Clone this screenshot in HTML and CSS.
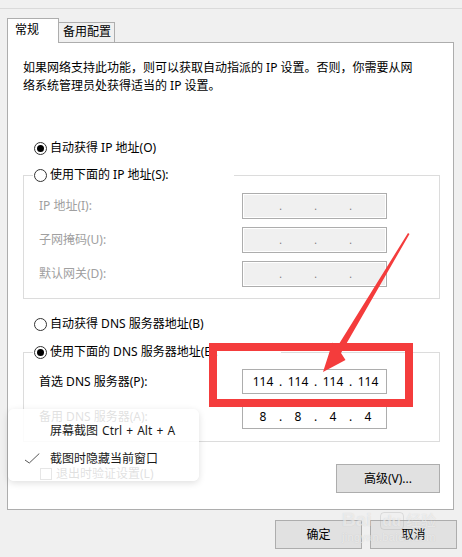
FILE: index.html
```html
<!DOCTYPE html>
<html lang="zh-CN">
<head>
<meta charset="utf-8">
<title>IPv4 属性</title>
<link rel="stylesheet" href="styles.css">
</head>
<body>
<div class="titlebar"></div>
<div class="tabs">
  <div class="tab active">常规</div>
  <div class="tab">备用配置</div>
</div>
<div class="panel">
  <p class="intro">如果网络支持此功能，则可以获取自动指派的 IP 设置。否则，你需要从网<br>络系统管理员处获得适当的 IP 设置。</p>
  <div class="opt opt-first"><span class="radio on"></span>自动获得 IP 地址(O)</div>
  <fieldset class="group group-ip">
    <legend class="opt legend-ip"><span class="radio"></span>使用下面的 IP 地址(S):</legend>
    <div class="row dim">
      <span class="lbl">IP 地址(I):</span>
      <div class="ip off"><span></span><i>.</i><span></span><i>.</i><span></span><i>.</i><span></span></div>
    </div>
    <div class="row dim">
      <span class="lbl">子网掩码(U):</span>
      <div class="ip off"><span></span><i>.</i><span></span><i>.</i><span></span><i>.</i><span></span></div>
    </div>
    <div class="row dim">
      <span class="lbl">默认网关(D):</span>
      <div class="ip off"><span></span><i>.</i><span></span><i>.</i><span></span><i>.</i><span></span></div>
    </div>
  </fieldset>
  <div class="opt opt-third"><span class="radio"></span>自动获得 DNS 服务器地址(B)</div>
  <fieldset class="group group-dns">
    <legend class="opt legend-dns"><span class="radio on"></span>使用下面的 DNS 服务器地址(E):</legend>
    <div class="row dns">
      <span class="lbl">首选 DNS 服务器(P):</span>
      <div class="ip"><span>114</span><i>.</i><span>114</span><i>.</i><span>114</span><i>.</i><span>114</span></div>
    </div>
    <div class="row dns">
      <span class="lbl">备用 DNS 服务器(A):</span>
      <div class="ip"><span>8</span><i>.</i><span>8</span><i>.</i><span>4</span><i>.</i><span>4</span></div>
    </div>
  </fieldset>
  <div class="bottom-row">
    <div class="check"><span class="box"></span>退出时验证设置(L)</div>
    <button class="btn btn-adv">高级(V)...</button>
  </div>
</div>
<div class="footer">
  <button class="btn btn-foot">确定</button>
  <button class="btn btn-foot">取消</button>
</div>

<div class="menu">
  <div class="menu-item"><span class="mark"></span>屏幕截图 Ctrl + Alt + A</div>
  <div class="menu-item"><span class="mark"><svg width="16" height="12" viewBox="0 0 16 12"><polyline points="1,7 5.3,10 15.3,0.5" fill="none" stroke="#555" stroke-width="1"/></svg></span>截图时隐藏当前窗口</div>
</div>

<svg class="annot" width="462" height="557" viewBox="0 0 462 557">
  <rect x="213" y="347" width="196" height="56" fill="none" stroke="#f43c3c" stroke-width="8"/>
  <polygon points="408,233 409.5,234 341,353 345.5,360 323,372 332.5,342.5 336.5,348" fill="#f43c3c"/>
</svg>

<div class="watermark">
  <div class="wm-top"><span class="wm-bai">Bai</span><span class="wm-du">du</span><span class="wm-jy">经验</span></div>
  <div class="wm-url">jingyan.baidu.com</div>
</div>
</body>
</html>
```
FILE: styles.css
```css
* { box-sizing: border-box; }

body {
  margin: 0;
  width: 462px;
  height: 557px;
  overflow: hidden;
  background: #f0f0f0;
  font-family: "Noto Sans", "Noto Sans CJK SC", sans-serif;
  font-size: 12px;
  line-height: 18px;
  color: #000;
  position: relative;
}

.titlebar {
  height: 9px;
  border-bottom: 1px solid #dadada;
}

.tabs {
  display: flex;
  align-items: flex-end;
  margin: 9px 0 -1px 7px;
}

.tab {
  background: #f0f0f0;
  border: 1px solid #adadad;
  border-left: 0;
  height: 21px;
  width: 56px;
  padding-left: 4px;
  line-height: 18px;
  padding-top: 0;
}

.tab.active {
  position: relative;
  z-index: 2;
  background: #fff;
  border-left: 1px solid #adadad;
  border-bottom: 0;
  height: 25px;
  width: 52px;
  padding-left: 7px;
  padding-top: 2px;
}

.panel {
  margin-left: 7px;
  width: 447px;
  height: 468px;
  background: #fff;
  border: 1px solid #adadad;
  padding: 0 13px 0 15px;
}

.intro {
  margin: 16px 0 0 0;
  line-height: 18px;
}

.opt {
  display: flex;
  align-items: center;
  height: 18px;
  line-height: 18px;
  padding-left: 11px;
  white-space: nowrap;
}

.opt-first { margin-top: 44px; }
.opt-third { margin-top: 16px; }

.radio {
  width: 13px;
  height: 13px;
  border: 1px solid #333;
  border-radius: 50%;
  background: #fff;
  margin-right: 3px;
  display: inline-flex;
  align-items: center;
  justify-content: center;
  flex: none;
}

.radio.on::after {
  content: "";
  width: 7px;
  height: 7px;
  border-radius: 50%;
  background: #000;
}

.group {
  margin: 0;
  border: 1px solid #dcdcdc;
  padding: 9px 0 11px 9px;
  min-width: 0;
}

.group-ip { margin-top: 9px; }
.group-dns { margin-top: 10px; padding-top: 8px; padding-bottom: 12px; }

legend.opt {
  padding: 0 0 0 1px;
  margin: 0;
}

.legend-ip { width: 201px; }
.legend-dns { width: 248px; }

.row {
  display: grid;
  grid-template-columns: 203px 145px;
  align-items: center;
  padding-left: 6px;
  height: 26px;
}

.row + .row { margin-top: 8px; }

.row.dns { height: 25px; }
.row.dns + .row.dns { margin-top: 10px; }

.row.dim .lbl { color: #a0a0a0; }

.ip {
  height: 100%;
  border: 1px solid #adadad;
  background: #fff;
  display: grid;
  grid-template-columns: 30px 5px 30px 5px 30px 5px 30px;
  padding-left: 5px;
  align-items: center;
  text-align: center;
  color: #000;
}

.ip i {
  font-style: normal;
}

.ip.off {
  background: #f0f0f0;
  box-shadow: inset 0 0 0 1px #fff;
}

.ip.off i {
  color: #7a7a7a;
  font-size: 10px;
}

.bottom-row {
  display: flex;
  justify-content: space-between;
  align-items: flex-start;
  margin-top: 22px;
}

.check {
  display: flex;
  align-items: center;
  padding-left: 17px;
  margin-top: 1px;
  white-space: nowrap;
}

.box {
  width: 12px;
  height: 12px;
  border: 1px solid #333;
  background: #fff;
  margin-right: 4px;
}

.btn {
  font-family: inherit;
  font-size: 12px;
  line-height: 18px;
  color: #000;
  background: #e1e1e1;
  border: 1px solid #adadad;
  padding: 0;
  height: 29px;
  margin: 0;
}

.btn-adv { width: 104px; }

.footer {
  display: flex;
  justify-content: flex-end;
  gap: 8px;
  padding-right: 5px;
  margin-top: 10px;
}

.btn-foot { width: 87px; }

.menu {
  position: absolute;
  left: 8px;
  top: 409px;
  width: 191px;
  height: 72px;
  background: rgba(255, 255, 255, 0.88);
  border-radius: 6px;
  box-shadow: 0 2px 7px rgba(0, 0, 0, 0.13);
  padding-top: 8px;
}

.menu-item {
  display: flex;
  align-items: center;
  height: 28px;
  padding-left: 16px;
  color: #1a1a1a;
  white-space: nowrap;
  word-spacing: 1px;
}

.mark {
  width: 26px;
  height: 12px;
  display: flex;
  align-items: center;
}

.mark svg { display: block; }

.annot {
  position: absolute;
  left: 0;
  top: 0;
  pointer-events: none;
}

.watermark {
  position: absolute;
  left: 342px;
  top: 500px;
  color: rgba(255, 255, 255, 0.55);
  text-shadow: 0 0 1px rgba(150, 150, 150, 0.35);
  font-family: "Liberation Sans", sans-serif;
  pointer-events: none;
}

.wm-top {
  display: flex;
  align-items: flex-end;
  height: 30px;
}

.wm-bai {
  font-size: 19px;
  font-weight: bold;
  line-height: 20px;
}

.wm-du {
  font-size: 15px;
  font-weight: bold;
  line-height: 16px;
  margin-left: 8px;
  padding: 0 2px;
  border-radius: 4px;
  border: 1px solid rgba(150, 150, 150, 0.25);
}

.wm-jy {
  font-family: "Noto Sans CJK SC", sans-serif;
  font-size: 15px;
  line-height: 20px;
  margin-left: 2px;
}

.wm-url {
  font-size: 11px;
  line-height: 14px;
  letter-spacing: 0.3px;
}
```
